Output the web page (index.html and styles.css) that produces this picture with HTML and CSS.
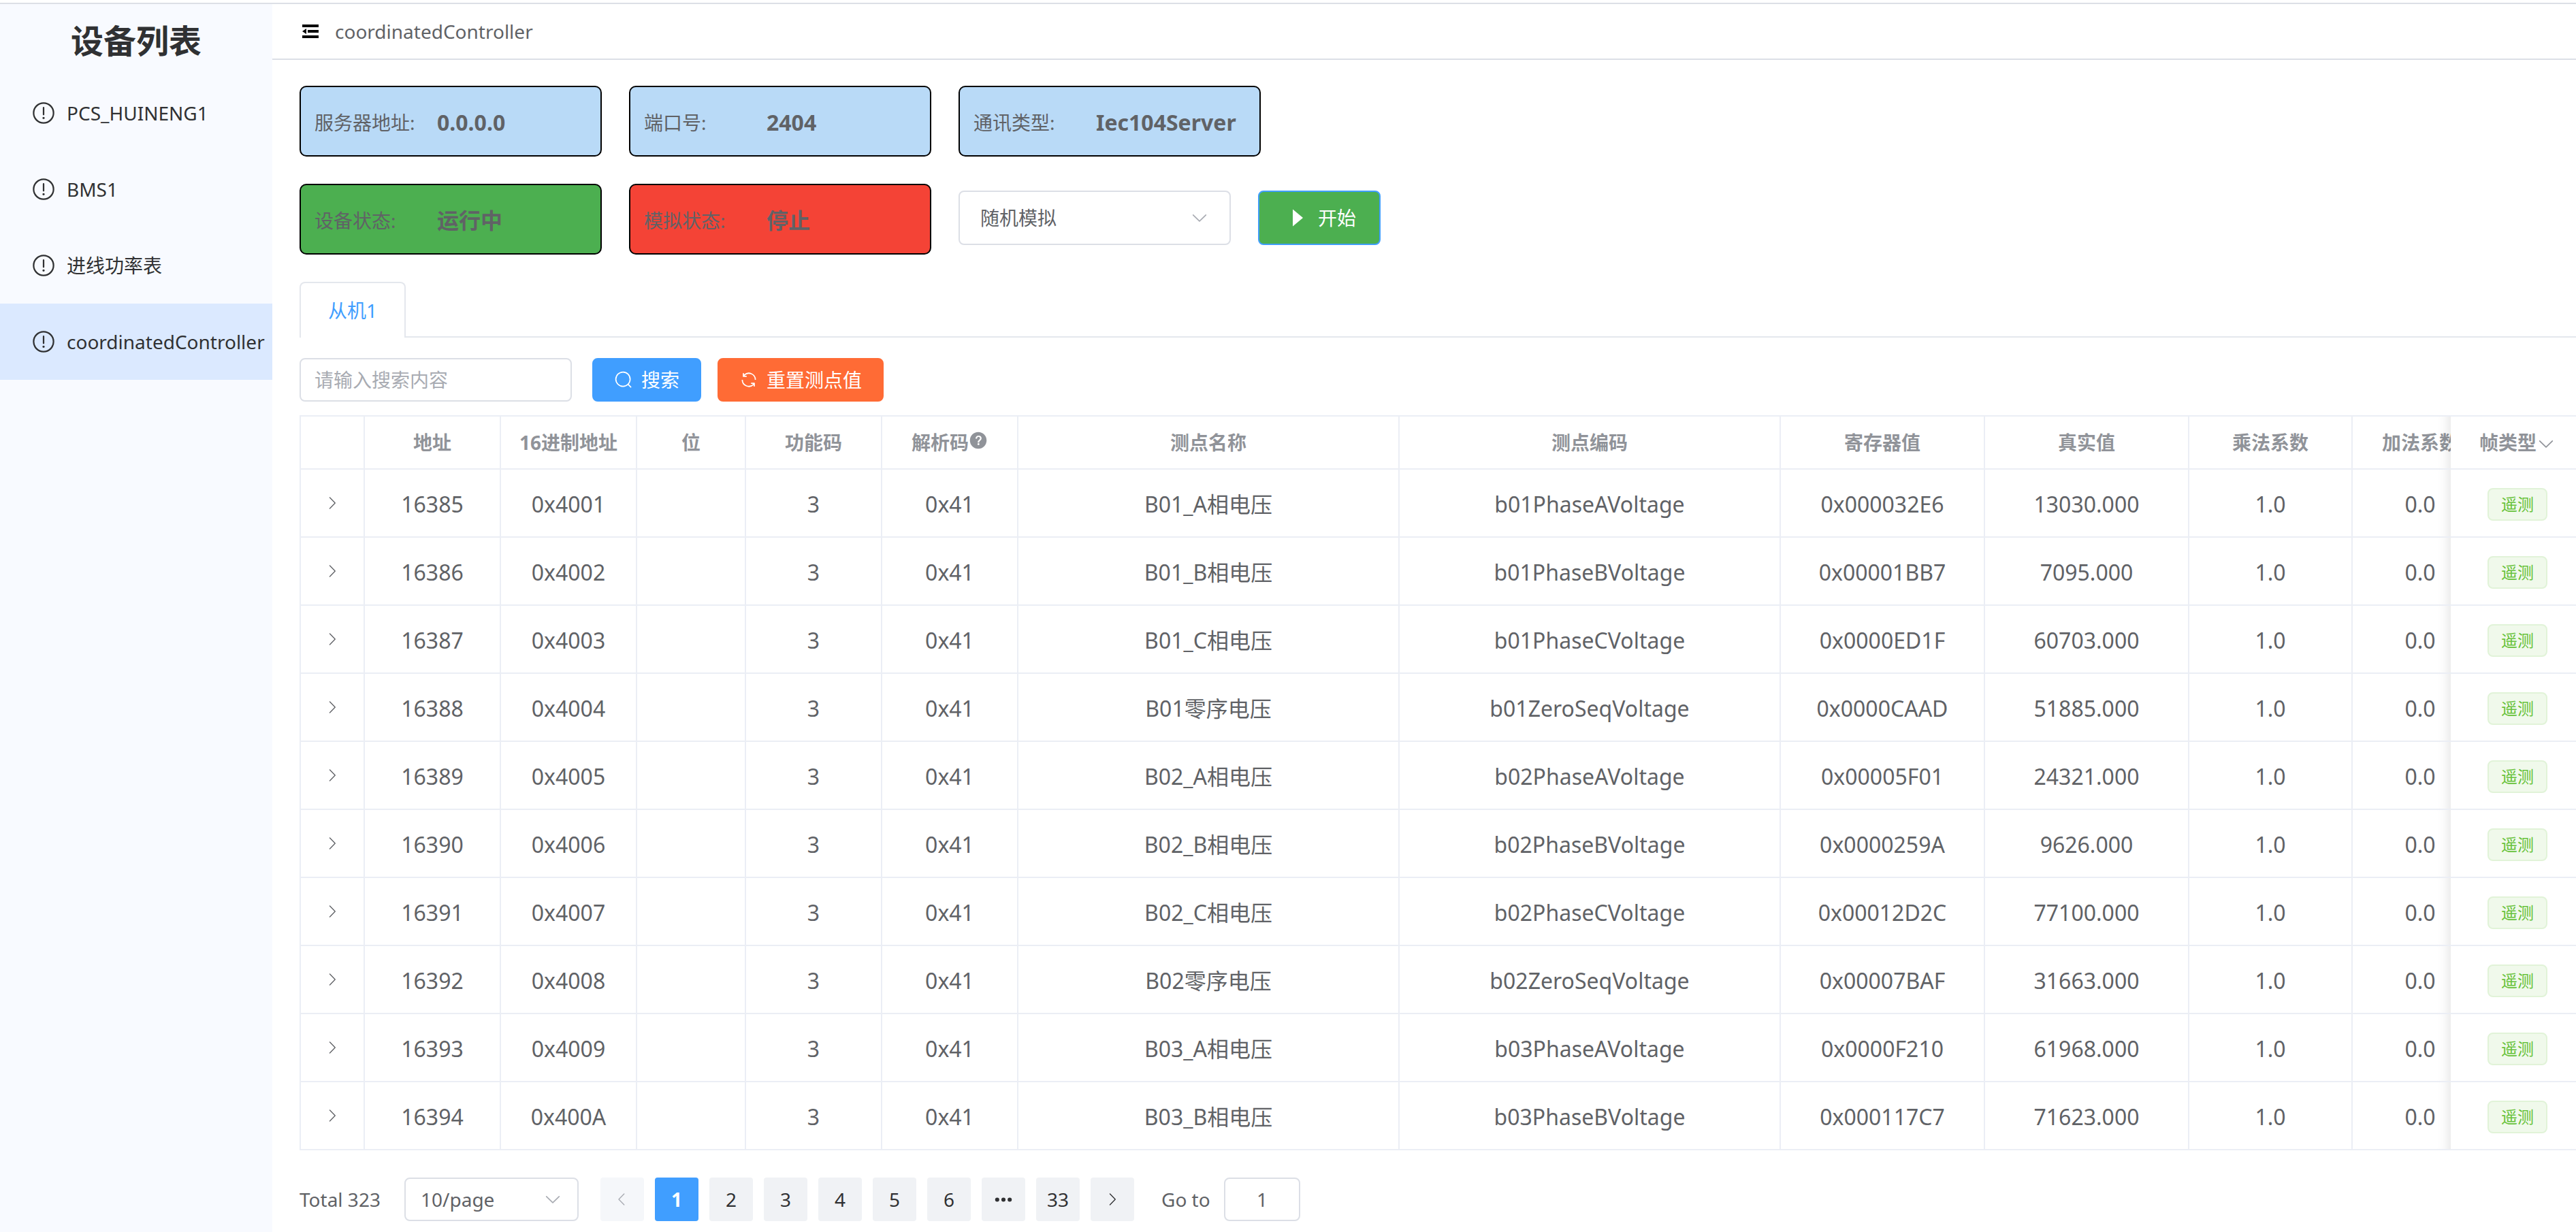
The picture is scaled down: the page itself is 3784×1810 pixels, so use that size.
FILE: index.html
```html
<!DOCTYPE html>
<html lang="zh-CN">
<head>
<meta charset="utf-8">
<meta name="viewport" content="width=device-width, initial-scale=1">
<title>coordinatedController</title>
<link rel="stylesheet" href="styles.css">
</head>
<body>
<svg class="sprite" aria-hidden="true">
  <symbol id="warning" viewBox="0 0 1024 1024"><path d="M512 64a448 448 0 1 1 0 896 448 448 0 0 1 0-896zm0 832a384 384 0 0 0 0-768 384 384 0 0 0 0 768zm48-176a48 48 0 1 1-96 0 48 48 0 0 1 96 0zm-48-464a32 32 0 0 1 32 32v288a32 32 0 0 1-64 0V288a32 32 0 0 1 32-32z"/></symbol>
  <symbol id="arrow-right" viewBox="0 0 1024 1024"><path d="M340.864 149.312a30.592 30.592 0 0 0 0 42.752L652.736 512 340.864 831.872a30.592 30.592 0 0 0 0 42.752 29.12 29.12 0 0 0 41.728 0L714.24 534.336a32 32 0 0 0 0-44.672L382.592 149.376a29.12 29.12 0 0 0-41.728 0z"/></symbol>
  <symbol id="arrow-left" viewBox="0 0 1024 1024"><path d="M609.408 149.376 277.76 489.6a32 32 0 0 0 0 44.672l331.648 340.352a29.12 29.12 0 0 0 41.728 0 30.592 30.592 0 0 0 0-42.752L339.264 511.936l311.872-319.872a30.592 30.592 0 0 0 0-42.688 29.12 29.12 0 0 0-41.728 0z"/></symbol>
  <symbol id="arrow-down" viewBox="0 0 1024 1024"><path d="M831.872 340.864 512 652.672 192.128 340.864a30.592 30.592 0 0 0-42.752 0 29.12 29.12 0 0 0 0 41.6L489.664 714.24a32 32 0 0 0 44.672 0l340.288-331.712a29.12 29.12 0 0 0 0-41.728 30.592 30.592 0 0 0-42.752 0z"/></symbol>
</svg>

<div class="app">
  <aside class="sidebar">
    <h1 class="sidebar-title">设备列表</h1>
    <nav class="device-list">
      <a class="device" href="#"><svg class="icon-lg"><use href="#warning"/></svg>PCS_HUINENG1</a>
      <a class="device" href="#"><svg class="icon-lg"><use href="#warning"/></svg>BMS1</a>
      <a class="device" href="#"><svg class="icon-lg"><use href="#warning"/></svg>进线功率表</a>
      <a class="device is-active" href="#"><svg class="icon-lg"><use href="#warning"/></svg>coordinatedController</a>
    </nav>
  </aside>

  <main class="main">
    <header class="topbar">
      <button class="fold" type="button" aria-label="折叠菜单">
        <svg class="icon-fold" viewBox="0 0 32 32"><path d="M4 6h24v4H4zM12 14h16v4H12zM4 22h24v4H4zM4 16l6-4v8z"/></svg>
      </button>
      <span>coordinatedController</span>
    </header>

    <div class="content">
      <section class="status">
        <div class="card"><span class="card-label">服务器地址:</span><b class="card-value">0.0.0.0</b></div>
        <div class="card"><span class="card-label">端口号:</span><b class="card-value">2404</b></div>
        <div class="card"><span class="card-label">通讯类型:</span><b class="card-value">Iec104Server</b></div>
      </section>
      <section class="status">
        <div class="card is-running"><span class="card-label">设备状态:</span><b class="card-value">运行中</b></div>
        <div class="card is-stopped"><span class="card-label">模拟状态:</span><b class="card-value">停止</b></div>
        <div class="select-box mode-select">
          <select aria-label="模拟方式"><option>随机模拟</option></select>
          <svg class="icon"><use href="#arrow-down"/></svg>
        </div>
        <button class="btn btn-start" type="button"><svg class="icon-play" viewBox="0 0 1024 1024"><path d="M384 192v640l384-320.064z"/></svg>开始</button>
      </section>

      <div class="tabs" role="tablist"><button class="tab" type="button" role="tab" aria-selected="true">从机1</button></div>

      <form class="toolbar">
        <input class="search" type="text" placeholder="请输入搜索内容" aria-label="搜索内容">
        <button class="btn btn-search" type="button"><svg class="icon" viewBox="0 0 1024 1024"><path d="m795.904 750.72 124.992 124.928a32 32 0 0 1-45.248 45.248L750.656 795.904a416 416 0 1 1 45.248-45.248zM480 832a352 352 0 1 0 0-704 352 352 0 0 0 0 704z"/></svg>搜索</button>
        <button class="btn btn-reset" type="button"><svg class="icon" viewBox="0 0 1024 1024"><path d="M771.776 794.88A384 384 0 0 1 128 512h64a320 320 0 0 0 555.712 216.448H654.72a32 32 0 1 1 0-64h149.056a32 32 0 0 1 32 32v148.928a32 32 0 1 1-64 0v-50.56zM276.288 295.616h92.992a32 32 0 0 1 0 64H220.16a32 32 0 0 1-32-32V178.56a32 32 0 0 1 64 0v50.56A384 384 0 0 1 896.128 512h-64a320 320 0 0 0-555.776-216.384z"/></svg>重置测点值</button>
      </form>

      <div class="table-wrap">
        <table class="points">
          <colgroup><col class="w-expand"><col class="w-200"><col class="w-200"><col class="w-160"><col class="w-200"><col class="w-200"><col class="w-560"><col class="w-560"><col class="w-300"><col class="w-300"><col class="w-240"><col class="w-200"><col class="w-type"></colgroup>
          <thead>
            <tr><th></th><th>地址</th><th>16进制地址</th><th>位</th><th>功能码</th><th>解析码<svg class="icon-help" viewBox="0 0 1024 1024"><path fill-rule="evenodd" d="M512 64a448 448 0 1 1 0 896 448 448 0 0 1 0-896zm23.744 191.488c-52.096 0-92.928 14.784-123.2 44.352-30.976 29.568-45.76 70.4-45.76 122.496h80.256c0-29.568 5.632-52.8 17.6-68.992 13.376-19.712 35.2-28.864 66.176-28.864 23.936 0 42.944 6.336 56.32 19.712 12.672 13.376 19.712 31.68 19.712 54.912 0 17.6-6.336 34.496-19.008 49.984l-8.448 9.856c-45.76 40.832-73.216 70.4-82.368 89.408-9.856 19.008-14.08 42.24-14.08 68.992v9.856h80.96v-9.856c0-16.896 3.52-31.68 10.56-45.76 6.336-12.672 15.488-24.64 28.16-35.2 33.792-29.568 54.208-48.576 60.544-55.616 16.896-22.528 26.048-51.392 26.048-86.592 0-42.944-14.08-76.736-42.24-101.376-28.16-25.344-65.472-37.312-111.232-37.312zm-12.672 406.208a54.272 54.272 0 0 0-38.72 14.784 49.408 49.408 0 0 0-15.488 38.016c0 15.488 4.928 28.16 15.488 38.016A54.848 54.848 0 0 0 523.072 768c15.488 0 28.16-4.928 38.72-14.784a51.52 51.52 0 0 0 16.192-38.72 51.968 51.968 0 0 0-15.488-38.016 55.936 55.936 0 0 0-39.424-14.784z"/></svg></th><th>测点名称</th><th>测点编码</th><th>寄存器值</th><th>真实值</th><th>乘法系数</th><th>加法系数</th><th class="fixed">帧类型<svg class="icon-filter"><use href="#arrow-down"/></svg></th></tr>
          </thead>
          <tbody>
            <tr><td class="expand"><svg class="icon-sm"><use href="#arrow-right"/></svg></td><td>16385</td><td>0x4001</td><td></td><td>3</td><td>0x41</td><td>B01_A相电压</td><td>b01PhaseAVoltage</td><td>0x000032E6</td><td>13030.000</td><td>1.0</td><td>0.0</td><td class="fixed"><span class="tag">遥测</span></td></tr>
            <tr><td class="expand"><svg class="icon-sm"><use href="#arrow-right"/></svg></td><td>16386</td><td>0x4002</td><td></td><td>3</td><td>0x41</td><td>B01_B相电压</td><td>b01PhaseBVoltage</td><td>0x00001BB7</td><td>7095.000</td><td>1.0</td><td>0.0</td><td class="fixed"><span class="tag">遥测</span></td></tr>
            <tr><td class="expand"><svg class="icon-sm"><use href="#arrow-right"/></svg></td><td>16387</td><td>0x4003</td><td></td><td>3</td><td>0x41</td><td>B01_C相电压</td><td>b01PhaseCVoltage</td><td>0x0000ED1F</td><td>60703.000</td><td>1.0</td><td>0.0</td><td class="fixed"><span class="tag">遥测</span></td></tr>
            <tr><td class="expand"><svg class="icon-sm"><use href="#arrow-right"/></svg></td><td>16388</td><td>0x4004</td><td></td><td>3</td><td>0x41</td><td>B01零序电压</td><td>b01ZeroSeqVoltage</td><td>0x0000CAAD</td><td>51885.000</td><td>1.0</td><td>0.0</td><td class="fixed"><span class="tag">遥测</span></td></tr>
            <tr><td class="expand"><svg class="icon-sm"><use href="#arrow-right"/></svg></td><td>16389</td><td>0x4005</td><td></td><td>3</td><td>0x41</td><td>B02_A相电压</td><td>b02PhaseAVoltage</td><td>0x00005F01</td><td>24321.000</td><td>1.0</td><td>0.0</td><td class="fixed"><span class="tag">遥测</span></td></tr>
            <tr><td class="expand"><svg class="icon-sm"><use href="#arrow-right"/></svg></td><td>16390</td><td>0x4006</td><td></td><td>3</td><td>0x41</td><td>B02_B相电压</td><td>b02PhaseBVoltage</td><td>0x0000259A</td><td>9626.000</td><td>1.0</td><td>0.0</td><td class="fixed"><span class="tag">遥测</span></td></tr>
            <tr><td class="expand"><svg class="icon-sm"><use href="#arrow-right"/></svg></td><td>16391</td><td>0x4007</td><td></td><td>3</td><td>0x41</td><td>B02_C相电压</td><td>b02PhaseCVoltage</td><td>0x00012D2C</td><td>77100.000</td><td>1.0</td><td>0.0</td><td class="fixed"><span class="tag">遥测</span></td></tr>
            <tr><td class="expand"><svg class="icon-sm"><use href="#arrow-right"/></svg></td><td>16392</td><td>0x4008</td><td></td><td>3</td><td>0x41</td><td>B02零序电压</td><td>b02ZeroSeqVoltage</td><td>0x00007BAF</td><td>31663.000</td><td>1.0</td><td>0.0</td><td class="fixed"><span class="tag">遥测</span></td></tr>
            <tr><td class="expand"><svg class="icon-sm"><use href="#arrow-right"/></svg></td><td>16393</td><td>0x4009</td><td></td><td>3</td><td>0x41</td><td>B03_A相电压</td><td>b03PhaseAVoltage</td><td>0x0000F210</td><td>61968.000</td><td>1.0</td><td>0.0</td><td class="fixed"><span class="tag">遥测</span></td></tr>
            <tr><td class="expand"><svg class="icon-sm"><use href="#arrow-right"/></svg></td><td>16394</td><td>0x400A</td><td></td><td>3</td><td>0x41</td><td>B03_B相电压</td><td>b03PhaseBVoltage</td><td>0x000117C7</td><td>71623.000</td><td>1.0</td><td>0.0</td><td class="fixed"><span class="tag">遥测</span></td></tr>
          </tbody>
        </table>
      </div>

      <nav class="pagination" aria-label="分页">
        <span class="total">Total 323</span>
        <div class="select-box size-select">
          <select aria-label="每页条数"><option>10/page</option></select>
          <svg class="icon"><use href="#arrow-down"/></svg>
        </div>
        <div class="pager">
          <button type="button" disabled aria-label="上一页"><svg class="icon-sm"><use href="#arrow-left"/></svg></button>
          <button type="button" class="is-current">1</button>
          <button type="button">2</button>
          <button type="button">3</button>
          <button type="button">4</button>
          <button type="button">5</button>
          <button type="button">6</button>
          <button type="button" aria-label="更多"><svg class="icon" viewBox="0 0 1024 1024"><path d="M176 416a112 112 0 1 1 0 224 112 112 0 0 1 0-224m336 0a112 112 0 1 1 0 224 112 112 0 0 1 0-224m336 0a112 112 0 1 1 0 224 112 112 0 0 1 0-224"/></svg></button>
          <button type="button">33</button>
          <button type="button" aria-label="下一页"><svg class="icon-sm"><use href="#arrow-right"/></svg></button>
        </div>
        <label class="goto" for="goto">Go to</label>
        <input class="goto-input" id="goto" type="text" value="1">
      </nav>
    </div>
  </main>
</div>
</body>
</html>
```
FILE: styles.css
```css
* {
  box-sizing: border-box;
}

body {
  margin: 0;
  padding-top: 4px;
  background: #fff;
  color: #606266;
  font: 28px/40px "Noto Sans", "Noto Sans CJK SC", sans-serif;
}

button,
input,
select {
  margin: 0;
  font: inherit;
  color: inherit;
}

button {
  cursor: pointer;
}

svg {
  flex: none;
  fill: currentColor;
}

.sprite {
  display: none;
}

.icon {
  width: 28px;
  height: 28px;
}

.icon-sm {
  width: 24px;
  height: 24px;
}

.icon-lg {
  width: 36px;
  height: 36px;
}

.icon-play {
  width: 40px;
  height: 40px;
}

.app {
  display: flex;
  min-height: calc(100vh - 4px);
  border-top: 2px solid #dcdfe6;
}

/* Sidebar */

.sidebar {
  flex: none;
  width: 400px;
  background: #f8faff;
  color: #303133;
}

.sidebar-title {
  margin: 0;
  padding: 22px 0 18px;
  font-size: 48px;
  line-height: 64px;
  text-align: center;
}

.device {
  display: flex;
  align-items: center;
  gap: 16px;
  height: 112px;
  padding-left: 46px;
  color: inherit;
  text-decoration: none;
  white-space: nowrap;
}

.device.is-active {
  background: #dbe9ff;
}

/* Main area */

.main {
  flex: 1;
  min-width: 0;
}

.topbar {
  display: flex;
  align-items: center;
  gap: 20px;
  height: 82px;
  padding-left: 40px;
  border-bottom: 2px solid #dcdfe6;
}

.fold {
  display: flex;
  padding: 0;
  border: 0;
  background: none;
  color: #000;
}

.icon-fold {
  width: 32px;
  height: 32px;
}

.content {
  padding: 38px 0 16px 40px;
}

.status {
  display: flex;
  gap: 40px;
  margin-bottom: 40px;
}

.card {
  display: flex;
  align-items: center;
  width: 444px;
  height: 104px;
  padding: 4px 20px 0;
  border: 2px solid #000;
  border-radius: 10px;
  background: #b9daf7;
}

.card.is-running {
  background: #4caf50;
}

.card.is-stopped {
  background: #f44336;
}

.card-label {
  flex: none;
  width: 180px;
}

.card-value {
  font-size: 32px;
  white-space: nowrap;
}

.select-box {
  display: grid;
  align-items: center;
}

.select-box select,
.select-box svg {
  grid-area: 1 / 1;
}

.select-box select {
  width: 100%;
  height: 100%;
  border: 2px solid #dcdfe6;
  border-radius: 8px;
  background: #fff;
  appearance: none;
}

.select-box svg {
  justify-self: end;
  color: #a8abb2;
  pointer-events: none;
}

.mode-select {
  width: 400px;
  height: 80px;
  margin-top: 10px;
}

.mode-select select {
  padding: 0 30px;
}

.mode-select svg {
  margin-right: 32px;
}

.btn {
  display: flex;
  align-items: center;
  gap: 12px;
  height: 64px;
  padding: 0 30px;
  border: 2px solid transparent;
  border-radius: 8px;
  color: #fff;
}

.btn-start {
  height: 80px;
  margin-top: 10px;
  padding: 0 34px;
  border-color: #409eff;
  background: #4caf50;
}

.btn-search {
  border-color: #409eff;
  background: #409eff;
}

.btn-reset {
  border-color: #ff6b35;
  background: #ff6b35;
}

.tabs {
  display: flex;
  border-bottom: 2px solid #e4e7ed;
}

.tab {
  height: 82px;
  margin-bottom: -2px;
  padding: 0 40px;
  border: 2px solid #e4e7ed;
  border-bottom: 0;
  border-radius: 8px 8px 0 0;
  background: #fff;
  color: #409eff;
}

.toolbar {
  display: flex;
  gap: 24px;
  margin: 30px 0 20px;
}

.search {
  width: 400px;
  height: 64px;
  margin-right: 6px;
  padding: 0 20px;
  border: 2px solid #dcdfe6;
  border-radius: 8px;
}

.search::placeholder {
  color: #a8abb2;
}

/* Table */

.table-wrap {
  overflow: hidden;
  border-left: 2px solid #ebeef5;
}

.points {
  width: 100%;
  min-width: 3398px;
  border-collapse: separate;
  border-spacing: 0;
  table-layout: fixed;
  font-size: 32px;
  text-align: center;
}

.w-expand {
  width: 94px;
}

.w-160 {
  width: 160px;
}

.w-200 {
  width: 200px;
}

.w-240 {
  width: 240px;
}

.w-300 {
  width: 300px;
}

.w-560 {
  width: 560px;
}

.w-type {
  width: 184px;
}

.points th,
.points td {
  padding: 0;
  border-right: 2px solid #ebeef5;
  border-bottom: 2px solid #ebeef5;
  background: #fff;
  white-space: nowrap;
}

.points th {
  height: 80px;
  border-top: 2px solid #ebeef5;
  color: #909399;
  font-size: 28px;
}

.points td {
  height: 100px;
  padding-top: 3px;
}

.points .expand {
  padding: 0;
}

.expand svg {
  display: block;
  margin: 0 auto;
}

.points .fixed {
  position: sticky;
  right: 0;
  padding-left: 12px;
  border-right: 0;
}

.fixed::before {
  content: "";
  position: absolute;
  top: 0;
  bottom: 0;
  left: -20px;
  width: 20px;
  box-shadow: inset -20px 0 20px -20px rgba(0, 0, 0, 0.15);
}

.icon-help {
  width: 28px;
  height: 28px;
  vertical-align: 0;
}

.icon-filter {
  width: 28px;
  height: 28px;
  vertical-align: -5px;
}

.tag {
  display: inline-block;
  height: 48px;
  padding: 0 18px;
  border: 2px solid #e1f3d8;
  border-radius: 8px;
  background: #f0f9eb;
  color: #67c23a;
  font-size: 24px;
  line-height: 44px;
  vertical-align: middle;
}

/* Pagination */

.pagination {
  display: flex;
  align-items: center;
  height: 64px;
  margin-top: 40px;
}

.total {
  width: 122px;
  margin-right: 32px;
  white-space: nowrap;
}

.size-select {
  width: 256px;
  height: 64px;
  margin-right: 32px;
}

.size-select select {
  padding: 0 22px;
}

.size-select svg {
  margin-right: 24px;
}

.pager {
  display: flex;
  gap: 16px;
}

.pager button {
  display: flex;
  align-items: center;
  justify-content: center;
  width: 64px;
  height: 64px;
  padding: 0;
  border: 0;
  border-radius: 4px;
  background: #f0f2f5;
  color: #303133;
}

.pager button:disabled {
  background: #f5f7fa;
  color: #a8abb2;
}

.pager .is-current {
  background: #409eff;
  color: #fff;
  font-weight: 700;
}

.goto {
  width: 76px;
  margin: 0 16px 0 40px;
  white-space: nowrap;
}

.goto-input {
  width: 112px;
  height: 64px;
  border: 2px solid #dcdfe6;
  border-radius: 8px;
  text-align: center;
}
```
